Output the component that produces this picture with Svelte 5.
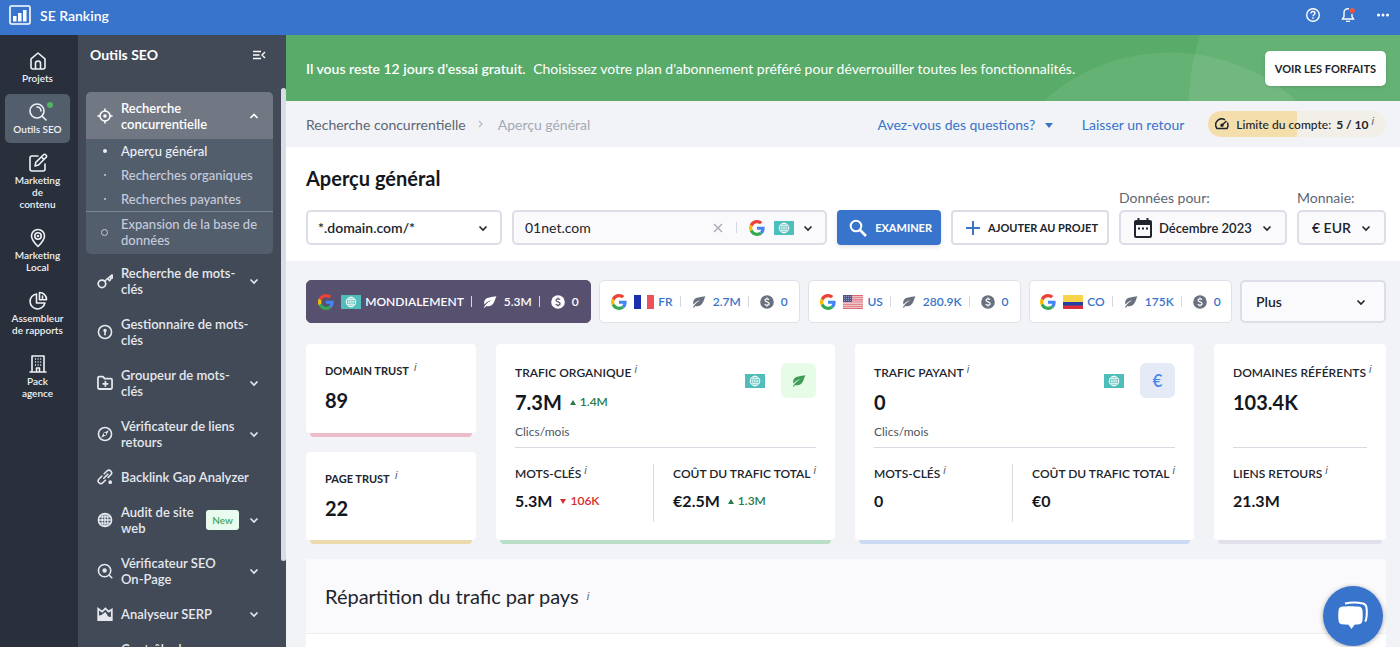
<script>
    let domainMode = $state('*.domain.com/*');
    let query = $state('01net.com');

    const rail = [
        { icon: 'home', label: 'Projets' },
        { icon: 'search', label: 'Outils SEO', active: true, dot: true },
        { icon: 'edit', label: 'Marketing\nde\ncontenu' },
        { icon: 'pin', label: 'Marketing\nLocal' },
        { icon: 'pie', label: 'Assembleur\nde rapports' },
        { icon: 'building', label: 'Pack\nagence' },
    ];

    const tools = [
        { icon: 'key', label: 'Recherche de mots-clés', arrow: true },
        { icon: 'manager', label: 'Gestionnaire de mots-clés' },
        { icon: 'folder', label: 'Groupeur de mots-clés', arrow: true },
        { icon: 'compass', label: 'Vérificateur de liens retours', arrow: true },
        { icon: 'link', label: 'Backlink Gap Analyzer' },
        { icon: 'globe', label: 'Audit de site web', badge: 'New', arrow: true },
        { icon: 'onpage', label: 'Vérificateur SEO On-Page', arrow: true },
        { icon: 'serp', label: 'Analyseur SERP', arrow: true },
        { icon: 'compass', label: 'Contrôle des changements', arrow: true },
    ];

    const markets = [
        { flag: 'world', name: 'MONDIALEMENT', organic: '5.3M', paid: '0', active: true },
        { flag: 'fr', name: 'FR', organic: '2.7M', paid: '0' },
        { flag: 'us', name: 'US', organic: '280.9K', paid: '0' },
        { flag: 'co', name: 'CO', organic: '175K', paid: '0' },
    ];

    const traffic = [
        {
            tone: 'green', title: 'TRAFIC ORGANIQUE', value: '7.3M', up: '1.4M',
            keywords: '5.3M', down: '106K', cost: '€2.5M', costUp: '1.3M',
        },
        { tone: 'blue', title: 'TRAFIC PAYANT', value: '0', keywords: '0', cost: '€0' },
    ];
</script>

{#snippet google()}
    <svg class="google" viewBox="0 0 48 48" aria-hidden="true">
        <path fill="#ea4335" d="M24 9.5c3.5 0 6.700 1.200 9.200 3.600l6.900-6.900C35.900 2.400 30.500 0 24 0 14.600 0 6.500 5.400 2.600 13.200l8 6.200C12.400 13.700 17.700 9.500 24 9.500z" />
        <path fill="#4285f4" d="M47 24.600c0-1.600-.2-3.100-.4-4.600H24v9h12.900c-.6 3-2.200 5.500-4.700 7.200l7.700 6C44.400 38 47 31.800 47 24.600z" />
        <path fill="#fbbc05" d="M10.500 28.600c-.5-1.500-.8-3-.8-4.600s.3-3.100.8-4.600l-8-6.200C.9 16.500 0 20.100 0 24s.9 7.500 2.600 10.800z" />
        <path fill="#34a853" d="M24 48c6.500 0 11.900-2.100 15.900-5.800l-7.700-6c-2.100 1.400-4.900 2.300-8.200 2.300-6.300 0-11.600-4.200-13.500-9.900l-8 6.200C6.500 42.600 14.600 48 24 48z" />
    </svg>
{/snippet}

{#snippet flag(name)}
    <svg class="flag" viewBox="0 0 20 14" aria-hidden="true">
        {#if name === 'world'}
            <rect width="20" height="14" fill="#4fbdb9" />
            <g fill="none" stroke="#fff">
                <circle cx="10" cy="7" r="4.800" />
                <path d="M5 7h10M10 2v10M6 4.600h8M6 9.400h8" stroke-width=".7" />
                <ellipse cx="10" cy="7" rx="2.200" ry="4.800" stroke-width=".7" />
            </g>
        {:else if name === 'fr'}
            <rect width="20" height="14" fill="#fff" />
            <rect width="7" height="14" fill="#1b2fae" />
            <rect x="13" width="7" height="14" fill="#ee5259" />
        {:else if name === 'us'}
            <rect width="20" height="14" fill="#f3e2e6" />
            <path stroke="#dd6872" stroke-width="1.100" d="M0 .6h20M0 2.700h20M0 4.900h20M0 7h20M0 9.200h20M0 11.300h20M0 13.400h20" />
            <rect width="9" height="7" fill="#50578c" />
            <path stroke="#aeb3d2" stroke-width=".7" stroke-dasharray="1 1" d="M1 1.500h7M1 3.500h7M1 5.500h7" />
        {:else}
            <rect width="20" height="14" fill="#f8d44c" />
            <rect y="7" width="20" height="4" fill="#2440a5" />
            <rect y="10.500" width="20" height="3.500" fill="#db2f3c" />
        {/if}
    </svg>
{/snippet}

{#snippet chevron(up)}
    <svg class="chevron" viewBox="0 0 10 10" aria-hidden="true">
        <path d={up ? 'M1.500 7 5 3.500 8.500 7' : 'M1.500 3.500 5 7l3.500-3.500'} fill="none" stroke="currentColor" stroke-width="1.600" />
    </svg>
{/snippet}

{#snippet leaf()}
    <svg class="leaf" viewBox="0 0 16 14" aria-hidden="true">
        <path fill="currentColor" d="M15.500.4C10.500 1.600 4 1.200 1.900 5c-1 1.800-.9 3.500-.2 4.900 2-2.400 4.700-4.300 7.900-5.200C6.400 6.800 3.200 9.400.8 13l1.300.7 1.400-2.100c3.400 1 6.700-.1 8.500-3C14.200 5.500 14 3 15.500.4z" />
    </svg>
{/snippet}

{#snippet coin()}
    <svg class="coin" viewBox="0 0 14 14" aria-hidden="true">
        <circle cx="7" cy="7" r="6.800" fill="currentColor" />
        <path class="sign" d="M9 4.800C8.500 4 7.900 3.800 7 3.800c-1.200 0-2 .6-2 1.500C5 7.400 9.100 6.400 9.100 8.600c0 1-.9 1.600-2.100 1.600-1 0-1.800-.4-2.200-1.200M7 2.500v1.300M7 10.200v1.300" fill="none" stroke-width="1.200" />
    </svg>
{/snippet}

{#snippet info()}<sup class="info">i</sup>{/snippet}

{#snippet icon(name)}
    <svg class="icon" viewBox="0 0 20 20" fill="none" stroke="currentColor" stroke-width="1.600" stroke-linecap="round" stroke-linejoin="round" aria-hidden="true">
        {#if name === 'home'}
            <path d="M3 7.800 10 2l7 5.800V16a2 2 0 0 1-2 2H5a2 2 0 0 1-2-2zM7.500 18v-5.500a2.500 2.500 0 0 1 5 0V18" />
        {:else if name === 'search'}
            <circle cx="9" cy="9" r="7" />
            <path d="m14 14 4 4M9 5a4 4 0 0 1 4 4" />
        {:else if name === 'edit'}
            <path d="M10 3H4a2 2 0 0 0-2 2v11a2 2 0 0 0 2 2h11a2 2 0 0 0 2-2v-5M7 13l.8-3.600L15.500 1.700a1.500 1.500 0 0 1 2.200 0l.4.4a1.500 1.500 0 0 1 0 2.200L10.500 12zM13.500 4l2.500 2.500" />
        {:else if name === 'pin'}
            <path d="M10 18.500C6 14.500 3.500 11.500 3.500 8a6.500 6.500 0 0 1 13 0c0 3.500-2.500 6.500-6.500 10.500z" />
            <circle cx="10" cy="8" r="3.200" />
            <circle cx="10" cy="8" r=".5" />
        {:else if name === 'pie'}
            <path d="M8.500 3a7.500 7.500 0 1 0 8.400 9H8.500zM11.500 1.500v7.300h7a7 7 0 0 0-7-7.300zM14.500 5v3.500" />
        {:else if name === 'building'}
            <path d="M4 18V2h12v16M2 18h16M8.500 18v-4h3v4" />
            <path d="M7 5h1M9.600 5h1M12.200 5h1M7 8h1M9.600 8h1M12.200 8h1M7 11h1M9.600 11h1M12.200 11h1" stroke-linecap="butt" />
        {:else if name === 'target'}
            <circle cx="10" cy="10" r="6.300" stroke-width="1.900" />
            <circle cx="10" cy="10" r="2.200" fill="currentColor" stroke="none" />
            <path d="M10 1.200v2.300M10 16.500v2.300M1.200 10h2.300M16.500 10h2.300" stroke-width="1.900" />
        {:else if name === 'key'}
            <circle cx="6.200" cy="13.500" r="4.700" stroke-width="2.200" />
            <path d="m9.700 10 8.800-7.500M13.500 7l2 2.700 1.500-1.300-.3-2.200 2.300.3V2.500" stroke-width="2" />
        {:else if name === 'manager'}
            <circle cx="10" cy="10" r="8.200" stroke-width="2" />
            <circle cx="10" cy="8" r="1.400" fill="currentColor" />
            <path d="M10 9v4.500" stroke-width="2" />
        {:else if name === 'folder'}
            <path d="M1.200 3.500A1.500 1.500 0 0 1 2.700 2h4.800l2 2.500h7.800A1.500 1.500 0 0 1 18.800 6v10a1.500 1.500 0 0 1-1.500 1.500H2.700A1.500 1.500 0 0 1 1.200 16zM10.500 8.200v5.600M7.700 11h5.600" stroke-width="2.200" />
        {:else if name === 'compass'}
            <circle cx="10" cy="10" r="8.200" stroke-width="2" />
            <path d="m14.800 5.200-3.200 6.400-6.400 3.200 3.200-6.400z" fill="currentColor" stroke="none" />
            <circle cx="10" cy="10" r=".7" stroke="#424a57" />
        {:else if name === 'link'}
            <path d="m8.500 11.500 5-5M9 6l3.500-3.500a3.200 3.200 0 0 1 4.700 4.700L14 10.500M6 9l-3.500 3.500a3.200 3.200 0 0 0 4.700 4.700L10.500 14" stroke-width="2" />
            <circle cx="16.500" cy="16.500" r="1.500" fill="currentColor" />
        {:else if name === 'globe'}
            <circle cx="10" cy="10" r="8.200" stroke-width="2" />
            <ellipse cx="10" cy="10" rx="3.700" ry="8" />
            <path d="M2 10h16M3 6.200h14M3 13.800h14M10 2v16" />
        {:else if name === 'onpage'}
            <circle cx="9.500" cy="9.500" r="7.700" stroke-width="2" />
            <circle cx="9.500" cy="9.500" r="2" fill="currentColor" />
            <path d="m15.300 15.300 3.200 3.200" stroke-width="2" />
        {:else if name === 'serp'}
            <path d="M1.500 3.500v14h17V4.500L14.500 7l-4-4L6.500 7z" stroke-width="2.200" stroke-linejoin="miter" />
            <path d="m1.500 12.500 4.500-1.500 4.500-3.500 3.500 5.500 4.500 1v4h-17z" fill="currentColor" stroke="none" />
        {/if}
    </svg>
{/snippet}

<div class="page">
    <header class="topbar">
        <svg class="logo" viewBox="0 0 22 20" aria-hidden="true">
            <rect x="1" y="1" width="20" height="18" rx="1.500" fill="none" stroke="#fff" stroke-width="1.600" />
            <path fill="#fff" d="M4 11h3.500v5.500H4zM9 8h3.500v8.500H9zM14 5h3.500v11.500H14z" />
        </svg>
        <span class="brand">SE Ranking</span>
        <button aria-label="Aide">
            <svg viewBox="0 0 16 16" fill="none" stroke="currentColor" stroke-width="1.400">
                <circle cx="8" cy="8" r="6.300" />
                <path d="M6 6.500C6 5.200 6.900 4.500 8 4.500s2 .8 2 1.800c0 1.300-2 1.500-2 2.900M8 10.300v1.400" />
            </svg>
        </button>
        <button aria-label="Notifications">
            <svg viewBox="0 0 16 16" fill="none" stroke="currentColor" stroke-width="1.400">
                <path d="M9 1.800C6 1.200 4 3.200 4 5.500v4L2.500 12h11L12 9.500V7M6 14.400h4" />
                <circle cx="12.300" cy="3.600" r="2.600" fill="#ee5548" stroke="none" />
            </svg>
        </button>
        <button aria-label="Menu">
            <svg viewBox="0 0 16 16" fill="currentColor">
                <circle cx="3.500" cy="8" r="1.500" /><circle cx="8" cy="8" r="1.500" /><circle cx="12.500" cy="8" r="1.500" />
            </svg>
        </button>
    </header>

    <div class="body">
        <nav class="rail">
            {#each rail as item}
                <a href="#{item.icon}" class:active={item.active}>
                    {@render icon(item.icon)}
                    {#if item.dot}<i class="dot"></i>{/if}
                    <span>{item.label}</span>
                </a>
            {/each}
        </nav>

        <aside class="tools">
            <div class="tools-head">
                <h2>Outils SEO</h2>
                <button aria-label="Réduire le menu">
                    <svg viewBox="0 0 14 12" fill="none" stroke="currentColor" stroke-width="1.300">
                        <path d="M1 2.500h8M1 6h6.500M1 9.500h8M13 3 10 6l3 3" />
                    </svg>
                </button>
            </div>
            <div class="group">
                <button class="tool open">
                    {@render icon('target')}
                    <span>Recherche concurrentielle</span>
                    {@render chevron(true)}
                </button>
                <a href="#apercu" class="sub current">Aperçu général</a>
                <a href="#organiques" class="sub">Recherches organiques</a>
                <a href="#payantes" class="sub">Recherches payantes</a>
                <a href="#expansion" class="sub last">Expansion de la base de données</a>
            </div>
            {#each tools as tool}
                <button class="tool">
                    {@render icon(tool.icon)}
                    <span>{tool.label}</span>
                    {#if tool.badge}<em>{tool.badge}</em>{/if}
                    {#if tool.arrow}{@render chevron(false)}{/if}
                </button>
            {/each}
            <div class="scrollbar"></div>
        </aside>

        <main>
            <div class="banner">
                <p><strong>Il vous reste 12 jours d'essai gratuit.</strong> Choisissez votre plan d'abonnement préféré pour déverrouiller toutes les fonctionnalités.</p>
                <button>VOIR LES FORFAITS</button>
            </div>

            <div class="crumbs">
                <a href="#recherche">Recherche concurrentielle</a>
                <svg class="sep" viewBox="0 0 6 8" aria-hidden="true"><path d="m1 1 3 3-3 3" fill="none" stroke="#b5bac3" stroke-width="1.200" /></svg>
                <span class="here">Aperçu général</span>
                <a href="#questions" class="help">Avez-vous des questions? <i class="caret"></i></a>
                <a href="#retour" class="feedback">Laisser un retour</a>
                <div class="limit">
                    <svg viewBox="0 0 14 12" aria-hidden="true" fill="none" stroke="currentColor" stroke-width="1.500">
                        <path d="M10 1.800A6 6 0 0 0 2 10.500h10a6 6 0 0 0 .3-6M6.500 7.500 11.500 3" />
                        <circle cx="7" cy="7.300" r="1" fill="currentColor" />
                    </svg>
                    <span>Limite du compte: <b>5 / 10</b>{@render info()}</span>
                </div>
            </div>

            <section class="search">
                <h1>Aperçu général</h1>
                <form class="controls" onsubmit={(e) => e.preventDefault()}>
                    <label class="select mode">
                        <select bind:value={domainMode} aria-label="Mode">
                            <option>*.domain.com/*</option>
                        </select>
                        {@render chevron(false)}
                    </label>
                    <div class="query">
                        <input type="text" bind:value={query} aria-label="Domaine" />
                        <button type="button" class="clear" aria-label="Effacer" onclick={() => (query = '')}>
                            <svg viewBox="0 0 10 10"><path d="m1 1 8 8M9 1 1 9" stroke="#a3a8b3" stroke-width="1.200" /></svg>
                        </button>
                        <i class="bar"></i>
                        <button type="button" class="engine" aria-label="Moteur de recherche">
                            {@render google()}
                            {@render flag('world')}
                            {@render chevron(false)}
                        </button>
                    </div>
                    <button class="primary">
                        <svg viewBox="0 0 18 18" fill="none" stroke="currentColor"><circle cx="7" cy="7" r="5.300" stroke-width="2" /><path d="m11 11 6 6" stroke-width="2.600" /></svg>
                        EXAMINER
                    </button>
                    <button type="button" class="add">
                        <svg viewBox="0 0 14 14"><path d="M7 0v14M0 7h14" stroke="#3874cb" stroke-width="2" /></svg>
                        AJOUTER AU PROJET
                    </button>
                    <div class="field">
                        <label for="month">Données pour:</label>
                        <div class="select month">
                            <svg class="calendar" viewBox="0 0 18 20" aria-hidden="true">
                                <rect x="1" y="3" width="16" height="16" rx="1" fill="none" stroke="currentColor" stroke-width="2" />
                                <path fill="currentColor" d="M1 3h16v4H1zM3.500 0h2v4h-2zM12.500 0h2v4h-2zM4 9.500h2v2H4zM8 9.500h2v2H8zM12 9.500h2v2h-2z" />
                            </svg>
                            <select id="month"><option>Décembre 2023</option></select>
                            {@render chevron(false)}
                        </div>
                    </div>
                    <div class="field">
                        <label for="currency">Monnaie:</label>
                        <div class="select">
                            <select id="currency"><option>€ EUR</option></select>
                            {@render chevron(false)}
                        </div>
                    </div>
                </form>
            </section>

            <section class="content">
                <div class="markets">
                    {#each markets as market}
                        <button class="market" class:active={market.active}>
                            {@render google()}
                            {@render flag(market.flag)}
                            <span>{market.name}</span>
                            <i class="bar"></i>
                            {@render leaf()}
                            <span>{market.organic}</span>
                            <i class="bar"></i>
                            {@render coin()}
                            <span>{market.paid}</span>
                        </button>
                    {/each}
                    <label class="select more">
                        <select aria-label="Plus de pays"><option>Plus</option></select>
                        {@render chevron(false)}
                    </label>
                </div>

                <div class="cards">
                    <div class="trusts">
                        <div class="card pink">
                            <h3>DOMAIN TRUST {@render info()}</h3>
                            <p class="value">89</p>
                        </div>
                        <div class="card yellow">
                            <h3>PAGE TRUST {@render info()}</h3>
                            <p class="value">22</p>
                        </div>
                    </div>
                    {#each traffic as t}
                        <div class="card big {t.tone}">
                            <div class="head">
                                <div>
                                    <h3>{t.title}{@render info()}</h3>
                                    <p class="value">
                                        {t.value}
                                        {#if t.up}<span class="delta up">{t.up}</span>{/if}
                                    </p>
                                    <p class="unit">Clics/mois</p>
                                </div>
                                {@render flag('world')}
                                <span class="tile">
                                    {#if t.tone === 'green'}{@render leaf()}{:else}€{/if}
                                </span>
                            </div>
                            <div class="split">
                                <div>
                                    <h3>MOTS-CLÉS{@render info()}</h3>
                                    <p class="value small">
                                        {t.keywords}
                                        {#if t.down}<span class="delta down">{t.down}</span>{/if}
                                    </p>
                                </div>
                                <div>
                                    <h3>COÛT DU TRAFIC TOTAL{@render info()}</h3>
                                    <p class="value small">
                                        {t.cost}
                                        {#if t.costUp}<span class="delta up">{t.costUp}</span>{/if}
                                    </p>
                                </div>
                            </div>
                        </div>
                    {/each}
                    <div class="card big grey">
                        <div class="head">
                            <div>
                                <h3>DOMAINES RÉFÉRENTS{@render info()}</h3>
                                <p class="value">103.4K</p>
                            </div>
                        </div>
                        <div class="split">
                            <div>
                                <h3>LIENS RETOURS{@render info()}</h3>
                                <p class="value small">21.3M</p>
                            </div>
                        </div>
                    </div>
                </div>

                <div class="panel">
                    <h2>Répartition du trafic par pays {@render info()}</h2>
                </div>
            </section>
        </main>
    </div>

    <button class="chat" aria-label="Chat">
        <svg viewBox="0 0 30 30" aria-hidden="true">
            <path d="M7 2.500c5-1 13-1 18 0 2 .4 3 1.500 3.400 3.500.6 4 .6 8-.2 12-.2 1-.7 2-1.200 2.500" fill="none" stroke="#fff" stroke-width="2" />
            <path fill="#fff" d="M3.500 5.800c5-.8 13-.8 18 0 1.500.3 2.500 1.300 2.800 2.800.6 4 .6 8 0 12-.3 1.500-1.300 2.400-2.800 2.700l-5 .5-3 4.200-3-4.200-7-.5c-1.500-.3-2.500-1.200-2.800-2.700-.6-4-.6-8 0-12 .3-1.500 1.300-2.500 2.800-2.800z" />
        </svg>
    </button>
</div>

<style>
    :global(body) {
        margin: 0;
        background: #f2f3f6;
    }
    .page {
        display: flex;
        flex-direction: column;
        height: 100vh;
        overflow: hidden;
        font-family: Lato, "Noto Sans", sans-serif;
        font-size: 14px;
        color: #20242c;
    }
    .page * {
        box-sizing: border-box;
    }
    h1, h2, h3, p {
        margin: 0;
    }
    a {
        color: inherit;
        text-decoration: none;
    }
    button, select, input {
        font: inherit;
        color: inherit;
        background: none;
        border: 0;
        padding: 0;
        margin: 0;
    }
    button {
        cursor: pointer;
    }
    select {
        appearance: none;
        flex: 1;
        outline: none;
    }
    svg {
        display: block;
        flex: none;
    }

    .topbar {
        display: flex;
        align-items: center;
        gap: 19px;
        flex: none;
        height: 35px;
        padding: 0 9px 5px 9px;
        background: #3874cb;
        color: #fff;
    }
    .topbar button svg {
        width: 16px;
        height: 16px;
    }
    .logo {
        width: 22px;
        height: 20px;
    }
    .brand {
        flex: 1;
        margin-left: -10px;
        font-weight: 600;
    }

    .body {
        display: flex;
        flex: 1;
        min-height: 0;
    }

    .rail {
        display: flex;
        flex-direction: column;
        gap: 2px;
        flex: none;
        width: 78px;
        padding: 8px 8px 0 5px;
        background: #29303c;
        color: #eef0f4;
        font-size: 10px;
        font-weight: 600;
        line-height: 12px;
        text-align: center;
        white-space: pre-line;
    }
    .rail a {
        position: relative;
        display: flex;
        flex-direction: column;
        align-items: center;
        gap: 1px;
        padding: 8px 4px;
        border-radius: 5px;
    }
    .rail a.active {
        background: #535e6d;
    }
    .rail .icon {
        width: 20px;
        height: 20px;
    }
    .dot {
        position: absolute;
        top: 8px;
        right: 17px;
        width: 6px;
        height: 6px;
        border-radius: 50%;
        background: #4fb562;
    }

    .tools {
        position: relative;
        flex: none;
        width: 208px;
        padding: 0 13px 0 8px;
        background: #424a57;
        color: #e6e8ee;
        font-size: 13px;
        font-weight: 600;
        line-height: 16px;
        overflow: hidden;
    }
    .tools-head {
        display: flex;
        justify-content: space-between;
        align-items: center;
        height: 57px;
        padding: 0 7px 17px 4px;
        color: #fff;
    }
    .tools-head h2 {
        font-size: 14px;
        font-weight: 700;
    }
    .tools-head svg {
        width: 14px;
        height: 12px;
    }
    .group {
        margin-bottom: 2px;
        border-radius: 5px;
        background: #535e6d;
        overflow: hidden;
    }
    .tool {
        display: flex;
        align-items: center;
        gap: 8px;
        width: 100%;
        padding: 9px 14px 10px 11px;
        text-align: left;
    }
    .tool span {
        flex: 1;
    }
    .tool .icon {
        width: 16px;
        height: 16px;
    }
    .tool.open {
        padding: 8px 14px 7px 11px;
        background: #717883;
        color: #fff;
    }
    .tool em {
        padding: 1px 6px;
        margin-right: 2px;
        border-radius: 3px;
        background: #e9fbee;
        color: #42a766;
        font-size: 10px;
        font-style: normal;
        line-height: 18px;
    }
    .chevron {
        width: 10px;
        height: 10px;
    }
    .sub {
        display: flex;
        align-items: center;
        gap: 13px;
        padding: 4px 12px 4px 17px;
        color: #c6cbdb;
        font-weight: 500;
    }
    .sub::before {
        content: "";
        flex: none;
        width: 2px;
        height: 2px;
        margin: 0 2px 0 1px;
        border-radius: 50%;
        background: currentColor;
    }
    .sub.current {
        color: #eef0f5;
    }
    .sub.current::before {
        width: 4px;
        height: 4px;
        margin: 0 1px 0 0;
    }
    .sub.last {
        padding: 4px 12px 6px 15px;
        border-top: 1px solid #7b8694;
    }
    .sub.last::before {
        width: 5px;
        height: 5px;
        margin: 0;
        border: 1px solid currentColor;
        background: none;
    }
    .scrollbar {
        position: absolute;
        top: 53px;
        right: 0;
        width: 5px;
        height: 473px;
        border-radius: 3px;
        background: #d9dbe6;
    }

    main {
        flex: 1;
        min-width: 0;
        overflow: hidden;
    }
    .banner {
        display: flex;
        justify-content: space-between;
        align-items: center;
        height: 66px;
        padding: 0 14px 0 20px;
        background:
            radial-gradient(circle at 1152px 75px, #ffffff14 249px, transparent 250px),
            radial-gradient(circle at 884px 207px, #ffffff14 189px, transparent 190px),
            #58ab69;
        color: #fff;
    }
    .banner strong {
        margin-right: 4px;
        font-weight: 600;
    }
    .banner button {
        height: 35px;
        padding: 0 10px;
        border-radius: 5px;
        background: #fff;
        color: #20242c;
        font-size: 11px;
        font-weight: 700;
        box-shadow: 0 1px 3px #00000022;
    }

    .crumbs {
        display: flex;
        align-items: center;
        height: 46px;
        padding: 0 14px 0 20px;
        color: #5b6673;
    }
    .sep {
        width: 6px;
        height: 8px;
        margin: 0 14px 0 12px;
    }
    .here {
        flex: 1;
        color: #a3a9b4;
    }
    .help, .feedback {
        color: #3874cb;
    }
    .feedback {
        margin: 0 24px 0 29px;
    }
    .caret {
        display: inline-block;
        margin: 0 0 2px 6px;
        border: 4px solid transparent;
        border-top: 5px solid #3874cb;
        border-bottom: 0;
    }
    .limit {
        display: flex;
        align-items: center;
        gap: 7px;
        height: 26px;
        padding: 0 12px 0 7px;
        border-radius: 13px;
        background: linear-gradient(90deg, #f4deab 50%, #f2efe9 50%);
        color: #20242c;
        font-size: 12px;
        font-weight: 500;
    }
    .limit svg {
        width: 14px;
        height: 12px;
    }
    .limit b {
        margin-left: 2px;
    }
    .info {
        margin-left: 3px;
        color: #55616e;
        font-family: "Liberation Sans", sans-serif;
        font-size: 11px;
        font-style: italic;
        font-weight: 400;
        line-height: 0;
        vertical-align: 4px;
    }

    .search {
        padding: 20px 14px 16px 20px;
        background: #fff;
    }
    h1 {
        font-size: 20px;
        font-weight: 700;
        line-height: 23px;
        color: #14171d;
    }
    .controls {
        display: flex;
        align-items: flex-end;
        gap: 10px;
    }
    .controls > button {
        display: flex;
        align-items: center;
        justify-content: center;
        gap: 8px;
        height: 35px;
        border-radius: 4px;
        font-size: 11px;
        font-weight: 700;
        white-space: nowrap;
    }
    .select {
        display: flex;
        align-items: center;
        gap: 10px;
        height: 35px;
        padding: 0 13px;
        border: 2px solid #dcdde6;
        border-radius: 5px;
        background: #fafafc;
        font-weight: 600;
    }
    .mode {
        width: 196px;
        padding: 0 12px 0 10px;
        background: #fff;
    }
    .month {
        font-size: 13px;
    }
    .query {
        display: flex;
        align-items: center;
        flex: 1;
        min-width: 0;
        height: 35px;
        padding: 0 12px 0 11px;
        border: 2px solid #dcdde6;
        border-radius: 5px;
        background: #fafafc;
    }
    .query input {
        flex: 1;
        min-width: 0;
        outline: none;
    }
    .query .bar {
        margin: 0 12px 0 13px;
    }
    .clear svg {
        width: 10px;
        height: 10px;
    }
    .engine {
        display: flex;
        align-items: center;
        gap: 9px;
    }
    .google {
        width: 16px;
        height: 16px;
    }
    .flag {
        width: 20px;
        height: 14px;
    }
    .primary {
        padding: 0 9px 0 12px;
        background: #3874cb;
        color: #fff;
        box-shadow: 0 2px 4px #0000001c;
    }
    .primary svg {
        width: 18px;
        height: 18px;
    }
    .add {
        padding: 0 9px 0 13px;
        border: 2px solid #dcdde6;
    }
    .add svg {
        width: 14px;
        height: 14px;
    }
    .field label {
        display: block;
        margin-bottom: 4px;
        color: #5b6673;
        line-height: 16px;
    }
    .calendar {
        width: 18px;
        height: 20px;
        margin-right: -3px;
    }

    .content {
        padding: 19px 14px 0 20px;
    }
    .markets {
        display: grid;
        grid-template-columns: 285fr 201fr 213fr 203fr 146fr;
        gap: 8px;
    }
    .market {
        display: flex;
        align-items: center;
        justify-content: center;
        gap: 7px;
        height: 43px;
        border: 1px solid #dfe1e8;
        border-radius: 5px;
        background: #fff;
        color: #3874cb;
        font-size: 12px;
        font-weight: 600;
        white-space: nowrap;
    }
    .market .flag {
        margin-right: -3px;
    }
    .market.active {
        background: #58506f;
        border-color: #58506f;
        color: #fff;
    }
    .bar {
        width: 1px;
        height: 11px;
        margin-right: 4px;
        background: #d5d8df;
    }
    .leaf {
        width: 14px;
        height: 12px;
        color: #68717d;
    }
    .coin {
        width: 14px;
        height: 14px;
        color: #68717d;
    }
    .sign {
        stroke: #fff;
    }
    .active .leaf, .active .coin {
        color: #fff;
    }
    .active .sign {
        stroke: #58506f;
    }
    .more {
        height: 43px;
        padding: 0 18px 0 14px;
    }

    .cards {
        display: grid;
        grid-template-columns: minmax(0, 170fr) minmax(0, 339fr) minmax(0, 339fr) minmax(0, 172fr);
        gap: 20px;
        margin-top: 21px;
    }
    .trusts {
        display: flex;
        flex-direction: column;
        gap: 19px;
    }
    .card {
        position: relative;
        border-radius: 4px;
        background: #fff;
    }
    .card::after {
        content: "";
        position: absolute;
        top: 100%;
        left: 4px;
        right: 4px;
        height: 4px;
        border-radius: 0 0 4px 4px;
        background: #e0e1ea;
    }
    .pink::after {
        background: #edbccb;
    }
    .yellow::after {
        background: #ecd9ac;
    }
    .green::after {
        background: #bbdfc6;
    }
    .blue::after {
        background: #c9daf2;
    }
    .trusts .card {
        flex: 1;
        padding: 19px 19px 0;
    }
    h3 {
        font-size: 12px;
        font-weight: 600;
        line-height: 16px;
        white-space: nowrap;
    }
    .trusts h3 {
        font-size: 11px;
        font-weight: 700;
    }
    .value {
        display: flex;
        align-items: center;
        gap: 8px;
        margin-top: 9px;
        color: #14171d;
        font-size: 20px;
        font-weight: 700;
        line-height: 24px;
        white-space: nowrap;
    }
    .value.small {
        margin-top: 7px;
        font-size: 16px;
    }
    .big {
        height: 196px;
        padding: 0 19px;
    }
    .head {
        display: flex;
        align-items: flex-start;
        height: 104px;
        padding-top: 19px;
        border-bottom: 1px solid #d8dae2;
    }
    .head > div {
        flex: 1;
        padding-top: 2px;
    }
    .unit {
        margin-top: 10px;
        color: #4c5661;
        font-size: 12px;
        line-height: 16px;
    }
    .head .flag {
        margin: 11px 16px 0 0;
    }
    .tile {
        display: flex;
        align-items: center;
        justify-content: center;
        width: 35px;
        height: 35px;
        border-radius: 6px;
        background: #e6fce6;
        font-size: 17px;
        font-weight: 600;
    }
    .tile .leaf {
        color: #3f9d58;
    }
    .blue .tile {
        background: #e4ebf7;
        color: #4a86ea;
    }
    .split {
        display: flex;
        padding-top: 16px;
    }
    .split > div {
        flex: 1;
        height: 58px;
        padding-top: 2px;
    }
    .split > div + div {
        padding-left: 19px;
        border-left: 1px solid #d8dae2;
    }
    .delta {
        display: flex;
        align-items: center;
        gap: 4px;
        font-size: 12px;
        font-weight: 600;
    }
    .delta::before {
        content: "";
        border: 3px solid transparent;
    }
    .up {
        color: #287a4b;
    }
    .up::before {
        border-top: 0;
        border-bottom: 5px solid #287a4b;
    }
    .down {
        color: #d92b2b;
    }
    .down::before {
        border-bottom: 0;
        border-top: 5px solid #d92b2b;
    }

    .panel {
        margin-top: 19px;
        min-height: 160px;
        background: #fff;
    }
    .panel h2 {
        padding: 24px 19px;
        border-bottom: 1px solid #eceef2;
        background: #fafafc;
        font-size: 20px;
        font-weight: 400;
        line-height: 26px;
    }

    .chat {
        position: fixed;
        right: 17px;
        bottom: 1px;
        display: flex;
        align-items: center;
        justify-content: center;
        width: 60px;
        height: 60px;
        border-radius: 50%;
        background: #3874cb;
        box-shadow: 0 1px 5px #00000055;
    }
    .chat svg {
        width: 30px;
        height: 30px;
    }
</style>
